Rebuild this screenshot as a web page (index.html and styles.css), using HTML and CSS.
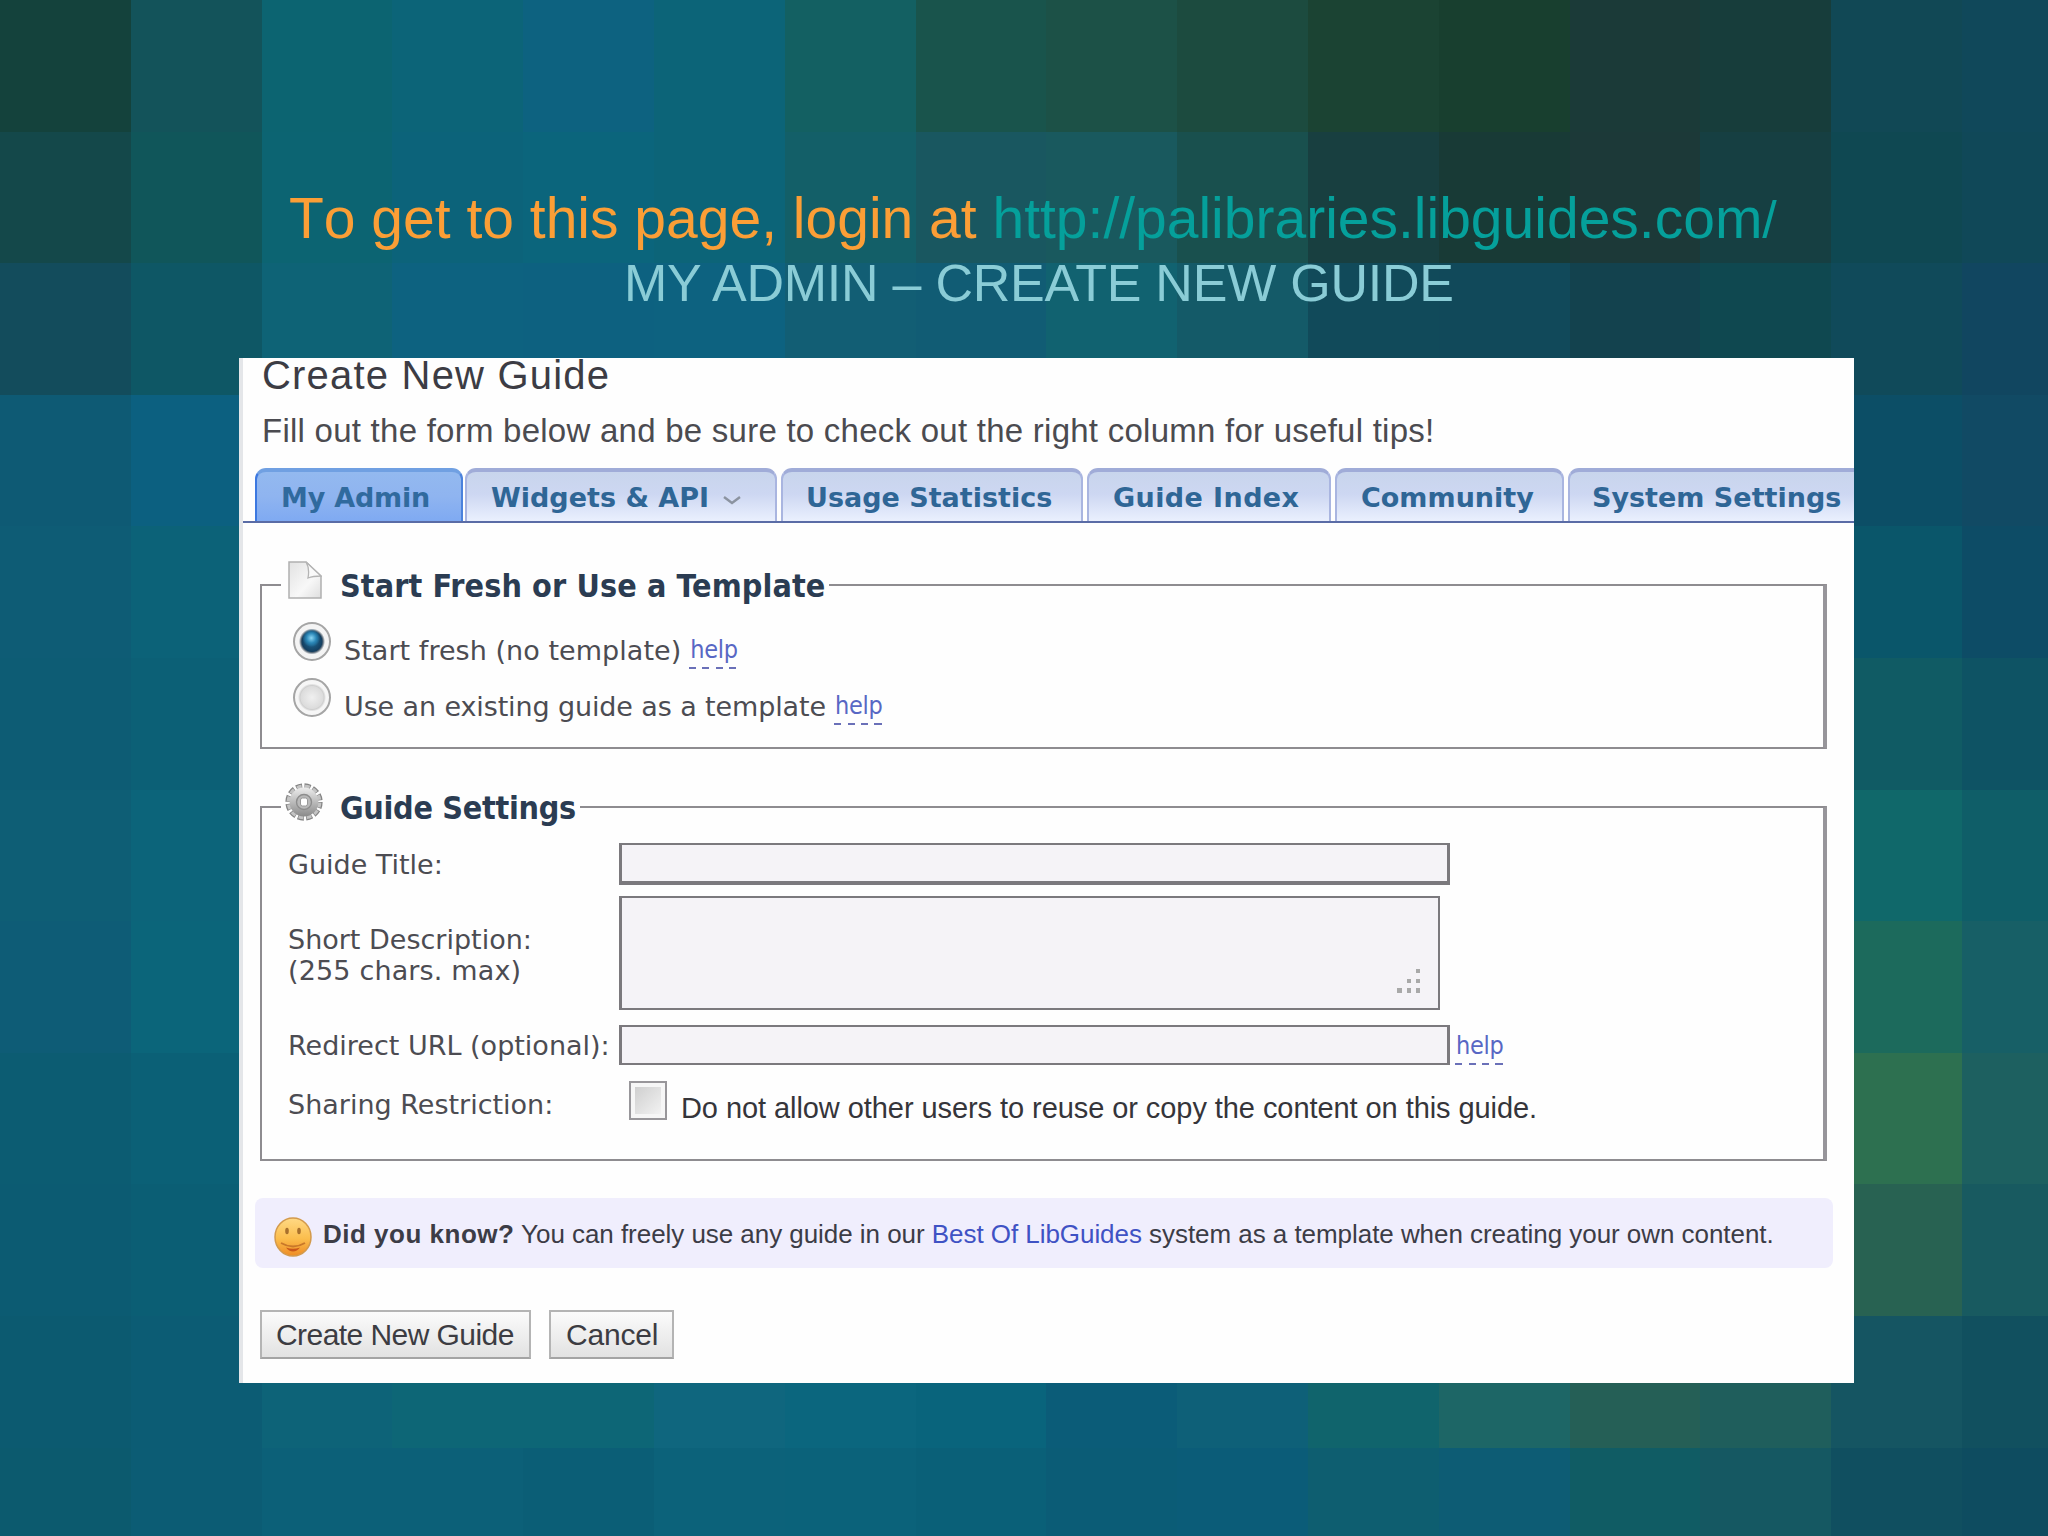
FILE: index.html
```
<!DOCTYPE html>
<html>
<head>
    <meta charset="utf-8" />
    <title>Create New Guide</title>
    <link rel="stylesheet" href="styles.css">
</head>
<body>
    <div class="mosaic" id="mosaic"></div>
    <div class="slide">
        <div class="heading">
            <h1>To get to this page, login at <a>http://palibraries.libguides.com<span class="slash">/</span></a></h1>
            <h2>MY ADMIN – CREATE NEW GUIDE</h2>
        </div>
        <div class="panel">
            <div class="title">Create New Guide</div>
            <div class="intro">Fill out the form below and be sure to check out the right column for useful tips!</div>
            <div class="tabs">
                <div class="tab active">My Admin</div>
                <div class="tab">Widgets &amp; API
                    <svg class="chevron" width="20" height="14" viewBox="0 0 20 14"><path d="M2 4 L10 10 L18 4" fill="none" stroke="#8b93a0" stroke-width="2.4" /></svg>
                </div>
                <div class="tab usage">Usage Statistics</div>
                <div class="tab index">Guide Index</div>
                <div class="tab">Community</div>
                <div class="tab last">System Settings</div>
            </div>
            <fieldset class="start">
                <legend>
                    <svg class="page" width="34" height="38" viewBox="0 0 34 38">
                        <defs>
                            <linearGradient id="paper" x1="0" y1="0" x2="1" y2="1">
                                <stop offset="0" stop-color="#e2e2e2" />
                                <stop offset="0.6" stop-color="#f8f8f8" />
                                <stop offset="1" stop-color="#dedede" />
                            </linearGradient>
                        </defs>
                        <path d="M1 1 H18 L33 15 V37 H1 Z" fill="url(#paper)" stroke="#b0b0b0" stroke-width="1.5" />
                        <path d="M18 1 C21 6 21 12 20 17 C25 15 29 15 33 15 Z" fill="#fafafa" stroke="#b4b4b4" stroke-width="1.3" />
                    </svg>
                    <span class="legend-text">Start Fresh or Use a Template</span>
                </legend>
                <div class="option">
                    <span class="radio checked"></span>
                    <span class="fresh">Start fresh (no template)</span>
                    <a class="help">help</a>
                </div>
                <div class="option">
                    <span class="radio"></span>
                    <span class="existing">Use an existing guide as a template</span>
                    <a class="help">help</a>
                </div>
            </fieldset>
            <fieldset class="settings">
                <legend>
                    <svg class="gear" width="38" height="38" viewBox="-19 -19 38 38">
                        <defs>
                            <linearGradient id="metal" x1="0" y1="0" x2="0" y2="1">
                                <stop offset="0" stop-color="#ececec" />
                                <stop offset="1" stop-color="#8a8a8a" />
                            </linearGradient>
                        </defs>
                        <circle r="15.9" fill="none" stroke="#858585" stroke-width="5.5" stroke-dasharray="6 2.325" />
                        <circle r="15.6" fill="none" stroke="#c4c4c4" stroke-width="3.5" stroke-dasharray="4.6 3.57" stroke-dashoffset="-.6" />
                        <circle r="14.4" fill="url(#metal)" />
                        <circle r="7.5" fill="#b9b9b9" stroke="#8d8d8d" stroke-width="1.4" />
                        <rect x="-3.5" y="-4" width="7" height="8" rx="2" fill="#fff" stroke="#999" stroke-width="1" />
                    </svg>
                    <span class="legend-text tight">Guide Settings</span>
                </legend>
                <div class="row row-title">
                    <label>Guide Title:</label>
                    <div class="field"></div>
                </div>
                <div class="row row-desc">
                    <label>Short Description:<br><span class="chars">(255 chars. max)</span></label>
                    <div class="field area">
                        <svg width="28" height="26" viewBox="0 0 28 26" fill="#a9a9a9">
                            <rect x="20" y="0" width="4" height="4" />
                            <rect x="11" y="10" width="4" height="4" />
                            <rect x="20" y="10" width="4" height="4" />
                            <rect x="1" y="19" width="5" height="5" />
                            <rect x="11" y="19" width="4" height="5" />
                            <rect x="20" y="19" width="4" height="5" />
                        </svg>
                    </div>
                </div>
                <div class="row row-url">
                    <label>Redirect URL (optional):</label>
                    <div class="field"></div>
                    <a class="help">help</a>
                </div>
                <div class="row row-share">
                    <label>Sharing Restriction:</label>
                    <span class="checkbox"></span>
                    <span class="share-text">Do not allow other users to reuse or copy the content on this guide.</span>
                </div>
            </fieldset>
            <div class="info">
                <svg class="smiley" width="38" height="40" viewBox="0 0 38 40">
                    <defs>
                        <linearGradient id="face" x1="0" y1="0" x2="0" y2="1">
                            <stop offset="0" stop-color="#ffd985" />
                            <stop offset="0.55" stop-color="#fbbd4c" />
                            <stop offset="1" stop-color="#ee8c25" />
                        </linearGradient>
                    </defs>
                    <ellipse cx="19" cy="20" rx="18" ry="19" fill="url(#face)" stroke="#d39a4c" stroke-width="1.5" />
                    <ellipse cx="13" cy="14" rx="1.8" ry="3.2" fill="#a8702c" />
                    <ellipse cx="25" cy="14" rx="1.8" ry="3.2" fill="#a8702c" />
                    <path d="M7 26 Q19 33 31 26" fill="none" stroke="#c8782a" stroke-width="1.8" />
                    <path d="M12 30.5 Q19 33 26 30.5 Q23 34.5 19 34.5 Q15 34.5 12 30.5 Z" fill="#c9571a" />
                </svg>
                <span class="info-text"><b>Did you know?</b> You can freely use any guide in our <a>Best Of LibGuides</a> system as a template when creating your own content.</span>
            </div>
            <div class="buttons">
                <div class="Button create">Create New Guide</div>
                <div class="Button cancel">Cancel</div>
            </div>
        </div>
    </div>
    <script type="text/javascript">
        // background tiles, one line per row
        var tiles = [
            "14423c 13535a 0c6471 0c6478 0d6280 0c6478 136062 19544c 1c5147 1c4b3f 1b4333 183f2f 1b3a38 173d3b 114855 10485a",
            "14484a 10565a 0c6472 0c637a 0b657c 0c6478 135f68 195760 19595e 19504e 183f40 183a36 1c3938 163f42 0f4852 104858",
            "134c5c 0e5765 0e6376 0d6280 0d6180 0d6280 125e74 115c74 116270 145a68 114a5a 11495a 13424e 0f4850 104a5a 114660",
            "0e5a74 0c6080 0c6080 0c6080 0c6080 0c6080 0c6080 0c6080 0c6080 0c6080 0c6080 0c6080 0c6080 0e5266 0c4e66 114a64",
            "0e5c75 0c6278 0c6278 0c6278 0c6278 0c6278 0c6278 0c6278 0c6278 0c6278 0c6278 0c6278 0c6278 0e5266 0a566a 0d4c66",
            "0d5c74 0c6076 0c6076 0c6076 0c6076 0c6076 0c6076 0c6076 0c6076 0c6076 0c6076 0c6076 0c6076 105b64 105b64 0e5364",
            "0e5e75 0c647a 0c647a 0c647a 0c647a 0c647a 0c647a 0c647a 0c647a 0c647a 0c647a 0c647a 0c647a 10686a 10686a 0f5e68",
            "0e5c76 0b657a 0b657a 0b657a 0b657a 0b657a 0b657a 0b657a 0b657a 0b657a 0b657a 0b657a 0b657a 1c6a5c 1c6a5c 175f66",
            "0c5c72 0b6076 0b6076 0b6076 0b6076 0b6076 0b6076 0b6076 0b6076 0b6076 0b6076 0b6076 0b6076 2d7050 2d7050 1d6060",
            "0c5b72 0b5e74 0b5e74 0b5e74 0b5e74 0b5e74 0b5e74 0b5e74 0b5e74 0b5e74 0b5e74 0b5e74 0b5e74 286252 286252 185a60",
            "0c5a70 0c5c74 0d6378 0d6676 0d6676 0f667e 0b667e 09647c 0b5c78 0e6078 10646c 1d6666 255f56 1f5e5c 155562 11505f",
            "0c5a6e 0c5c74 0c6078 0c6078 0b5e76 0c627a 0b627a 0a6078 0b5c76 0b5c78 0e5e70 0d5c74 105c64 155862 104f60 0e4c60"
        ];
        var mosaic = document.getElementById("mosaic");
        for (var r = 0; r < tiles.length; r++) {
            var row = tiles[r].split(" ");
            for (var i = 0; i < row.length; i++) {
                var tile = document.createElement("div");
                tile.style.backgroundColor = "#" + row[i];
                mosaic.appendChild(tile);
            }
        }
    </script>
</body>
</html>
```
FILE: styles.css
```
body {
    margin: 0;
    width: 2048px;
    height: 1536px;
    overflow: hidden;
    background-color: #0c6078;
    font-family: "Liberation Sans", Arial, sans-serif;
}
/* lies behind the whole slide */
.mosaic {
    position: absolute;
    width: 2048px;
    height: 1536px;
    overflow: hidden;
    display: grid;
    grid-template-columns: repeat(15, 130.8px) 1fr;
    grid-template-rows: repeat(11, 131.6px) 1fr;
    z-index: -1;
}
.slide {
    padding: 185px 0 0 239px;
}
.heading {
    width: 1615px;
    height: 173px;
    white-space: nowrap;
}
h1, h2 {
    margin: 0;
    font-weight: normal;
}
h1 {
    padding-left: 50px;
    font-size: 57px;
    line-height: 67px;
    font-kerning: none;
    color: #fb9e36;
}
    h1 a {
        color: #05a09b;
    }
.slash {
    font-size: 52px;
}
h2 {
    padding-left: 385px;
    font-size: 52px;
    line-height: 59px;
    letter-spacing: -0.23px;
    color: #8accd6;
}
.panel {
    box-sizing: border-box;
    width: 1615px;
    height: 1025px;
    border-left: 4px solid #e4e6e9;
    background-color: #fefefe;
    overflow: hidden;
    white-space: nowrap;
}
.title {
    padding-left: 19px;
    font-size: 40px;
    line-height: 34px;
    letter-spacing: 1.2px;
    color: #3c3c44;
}
.intro {
    padding-left: 19px;
    font-size: 33px;
    line-height: 77px;
    height: 76px;
    letter-spacing: 0.25px;
    color: #4b4b50;
}
.tabs {
    display: grid;
    grid-template-columns: 210px 316px 306px 248px 233px 300px;
    height: 53px;
    padding-left: 12px;
    border-bottom: 2px solid #5a6ca6;
}
.tab {
    box-sizing: border-box;
    margin-right: 4px;
    padding-left: 24px;
    height: 53px;
    border: 2px solid #a9b5e0;
    border-top: 4px solid #a0acd8;
    border-bottom: 0;
    border-radius: 11px 11px 0 0;
    background: linear-gradient(#c8d5ec, #cdd7f2 45%, #eaf0fe);
    font-family: "DejaVu Sans", Verdana, sans-serif;
    font-weight: bold;
    font-size: 27px;
    line-height: 52px;
    color: #2f6696;
}
    .tab.active {
        margin-right: 2px;
        padding-left: 24px;
        border-color: #70a0e2 #4b82dc #4b82dc #3c78e0;
        background: linear-gradient(#93b9ef, #8fb4f0 50%, #7faaf2);
        letter-spacing: -0.2px;
        color: #306a9e;
    }
    .tab.usage {
        padding-left: 23px;
    }
    .tab.index {
        letter-spacing: 0.4px;
    }
    .tab.last {
        padding-left: 22px;
        border-right: 0;
        border-radius: 11px 0 0 0;
    }
.chevron {
    margin-left: 4px;
    vertical-align: 0;
}
fieldset {
    box-sizing: border-box;
    width: 1567px;
    margin: 0 0 0 17px;
    padding: 0;
    border: 2px solid #8e8c90;
    border-right: 4px solid #97959a;
    font-family: "DejaVu Sans", Verdana, sans-serif;
    font-size: 27px;
    color: #4c4c52;
}
legend {
    display: flex;
    align-items: center;
    height: 50px;
    margin-left: 19px;
    padding-right: 4px;
    font-family: "DejaVu Sans Condensed", Tahoma, sans-serif;
    font-weight: bold;
    font-size: 32px;
    letter-spacing: 0.1px;
    color: #2b3c52;
}
.legend-text {
    margin-top: 2px;
}
.tight {
    letter-spacing: -0.3px;
}
.page {
    margin: 0 18px 10px 5px;
}
.gear {
    margin: 0 17px 10px 2px;
}
.start {
    height: 189px;
    margin-top: 37px;
}
.option {
    display: flex;
    align-items: center;
    height: 56px;
    padding-left: 31px;
}
.start legend + .option {
    margin-top: 12px;
}
.radio {
    box-sizing: border-box;
    width: 38px;
    height: 39px;
    margin: 0 13px 18px 0;
    border: 2px solid #a5a5a5;
    border-radius: 50%;
    background: radial-gradient(circle at 50% 50%, #f0f0f0, #dcdcdc 11px, #cfcfcf 12px, #f6f6f6 14px);
}
    .radio.checked {
        background: radial-gradient(circle at 48% 40%, #8ad6f4 0, #2a86b6 5px, rgba(42, 134, 182, 0) 9px), radial-gradient(circle, #1f6a96 0, #143f60 10px, #5a6a78 11px, #f4f4f4 13px);
    }
.fresh {
    letter-spacing: 0.05px;
}
.existing {
    letter-spacing: -0.12px;
}
.help {
    height: 34px;
    margin-left: 8px;
    padding-left: 1px;
    background: repeating-linear-gradient(90deg, #6a70b8 0 7px, transparent 7px 13.5px) left bottom / 100% 2px no-repeat;
    font-family: "DejaVu Sans Condensed", Tahoma, sans-serif;
    font-size: 25px;
    line-height: 30px;
    letter-spacing: -0.3px;
    color: #5867c4;
}
.option .help {
    margin-top: 3px;
}
.settings {
    height: 379px;
    margin-top: 33px;
}
.row {
    display: flex;
    align-items: center;
    padding-left: 26px;
}
label {
    width: 331px;
    line-height: 31px;
}
.chars {
    letter-spacing: 0.15px;
}
.field {
    box-sizing: border-box;
    width: 831px;
    height: 100%;
    border: 3px solid #7b797d;
    border-top-width: 2px;
    background-color: #f5f3f7;
}
.row-title {
    height: 42px;
    margin-top: 11px;
}
    .row-title label {
        margin-top: 1px;
    }
    .row-title .field {
        border-bottom-width: 4px;
    }
.row-desc {
    height: 114px;
    margin-top: 11px;
}
    .row-desc label {
        margin-top: 4px;
    }
    .row-desc .area {
        display: flex;
        justify-content: flex-end;
        align-items: flex-end;
        width: 821px;
        padding: 0 14px 13px 0;
        border-right-width: 2px;
        border-bottom-width: 2px;
    }
.row-url {
    height: 40px;
    margin-top: 15px;
}
    .row-url .field {
        border-bottom-width: 2px;
    }
    .row-url .help {
        margin: 5px 0 0 5px;
    }
.row-share {
    height: 40px;
    margin-top: 15px;
}
    .row-share label {
        margin-top: 8px;
    }
.checkbox {
    box-sizing: border-box;
    width: 38px;
    height: 39px;
    margin-left: 10px;
    border: 2px solid #98969a;
    background: linear-gradient(135deg, #cfcfcf, #f2f2f2) center / 26px 27px no-repeat, #f6f6f6;
}
.share-text {
    margin: 17px 0 0 14px;
    font-family: "Liberation Sans", Arial, sans-serif;
    font-size: 29px;
    letter-spacing: -0.07px;
    color: #35353a;
}
.info {
    display: flex;
    align-items: center;
    width: 1578px;
    height: 70px;
    margin: 37px 0 0 12px;
    border-radius: 8px;
    background-color: #f0eefd;
    font-size: 26px;
    letter-spacing: -0.05px;
    color: #3c3c46;
}
    .info b {
        letter-spacing: 0.5px;
    }
    .info a {
        color: #3f52c4;
    }
.info-text {
    margin-top: 3px;
}
.smiley {
    margin: 7px 11px 0 19px;
}
.buttons {
    display: flex;
    gap: 18px;
    margin: 42px 0 0 17px;
}
.Button {
    box-sizing: border-box;
    height: 49px;
    border: 2px solid #b4b4b4;
    border-bottom-color: #a4a4a4;
    background: linear-gradient(#fbfbfb, #e2e2e2);
    font-size: 30px;
    line-height: 46px;
    color: #3c3c42;
}
.create {
    width: 271px;
    padding-left: 14px;
    letter-spacing: -0.56px;
}
.cancel {
    width: 125px;
    padding-left: 15px;
    letter-spacing: -0.2px;
}
```
